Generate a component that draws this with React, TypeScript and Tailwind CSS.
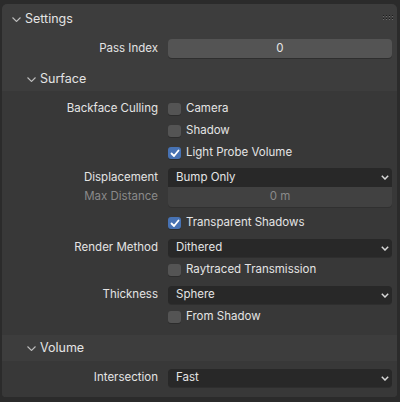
import React from "react";

const Chev = ({ className = "" }: { className?: string }) => (
  <svg width="9" height="5" viewBox="0 0 9 5" className={className}>
    <polyline points="0.5,0.5 4.5,4.5 8.5,0.5" fill="none" stroke="#bcbcbc" strokeWidth="1.1" />
  </svg>
);

const Caret = () => (
  <svg width="8" height="5" viewBox="0 0 8 5">
    <polyline points="0.8,0.8 4,4 7.2,0.8" fill="none" stroke="#d8d8d8" strokeWidth="1.5" />
  </svg>
);

const Row = ({
  label,
  dim,
  className = "",
  children,
}: {
  label?: string;
  dim?: boolean;
  className?: string;
  children?: React.ReactNode;
}) => (
  <div className={`flex items-center ${className}`}>
    <div className={`w-[156px] shrink-0 text-right ${dim ? "text-[#8a8a8a]" : "text-[#e4e4e4]"}`}>
      {label}
    </div>
    <div className="ml-[10px] w-[224px] shrink-0">{children}</div>
  </div>
);

const CheckBox = ({ checked, label }: { checked?: boolean; label: string }) => (
  <div className="flex items-center">
    <div
      className={`w-[13px] h-[12px] rounded-[3px] flex items-center justify-center shadow-[0_1px_0_#2c2c2c] ${
        checked ? "bg-[#4772b3]" : "bg-[#545454]"
      }`}
    >
      {checked && (
        <svg width="10" height="9" viewBox="0 0 10 9">
          <polyline points="1.5,4.5 4,7 8.5,1.5" fill="none" stroke="#ffffff" strokeWidth="1.8" strokeLinecap="round" strokeLinejoin="round" />
        </svg>
      )}
    </div>
    <span className="ml-[5px] text-[#e4e4e4]">{label}</span>
  </div>
);

const Dropdown = ({ value, className = "" }: { value: string; className?: string }) => (
  <div
    className={`bg-[#282828] flex items-center justify-between pl-[8px] pr-[3px] text-[#e4e4e4] ${className}`}
  >
    <span>{value}</span>
    <Caret />
  </div>
);

const SubHeader = ({ title, className = "" }: { title: string; className?: string }) => (
  <div className={`flex items-center bg-[#3d3d3d] ${className}`}>
    <Chev className="ml-[25px]" />
    <span className="ml-[4px] text-[12.5px] text-[#e4e4e4]">{title}</span>
  </div>
);

export default function App() {
  return (
    <div className="w-[400px] h-[402px] bg-[#2b2b2b] pt-[4px] overflow-hidden font-['Inter','Noto_Sans',sans-serif] text-[11.5px] leading-none">
      <div className="ml-[2px] w-[395px] rounded-t-[5px] rounded-b-[4px] bg-[#3d3d3d] overflow-hidden">
        {/* Settings header */}
        <div className="h-[30px] flex items-center relative">
          <Chev className="ml-[10px]" />
          <span className="ml-[4px] text-[12.5px] text-[#e4e4e4]">Settings</span>
          <div className="absolute right-[4px] top-[11px] grid grid-cols-4 gap-x-[2px] gap-y-[2px]">
            {Array.from({ length: 8 }).map((_, i) => (
              <div key={i} className="w-[1px] h-[1px] bg-[#1c1c1c] shadow-[0_1px_0_#6a6a6a]" />
            ))}
          </div>
        </div>

        {/* Pass Index */}
        <Row label="Pass Index" className="mt-[5px] h-[19px]">
          <div className="h-[19px] rounded-[4px] bg-[#545454] flex items-center justify-center text-[#e6e6e6] shadow-[0_1px_0_#2e2e2e]">
            0
          </div>
        </Row>

        {/* Surface */}
        <SubHeader title="Surface" className="mt-[10px] h-[23px]" />
        <div className="bg-[#383838] pt-[7px] pb-[7px]">
          <Row label="Backface Culling" className="h-[22px]">
            <CheckBox label="Camera" />
          </Row>
          <Row className="h-[22px]">
            <CheckBox label="Shadow" />
          </Row>
          <Row className="h-[22px]">
            <CheckBox checked label="Light Probe Volume" />
          </Row>
          <Row label="Displacement" className="mt-[4px] h-[19px]">
            <Dropdown value="Bump Only" className="h-[19px] rounded-t-[4px]" />
          </Row>
          <Row label="Max Distance" dim className="h-[20px]">
            <div className="h-[20px] rounded-b-[4px] bg-[#414141] flex items-center justify-center text-[#8a8a8a] shadow-[0_1px_0_#303030]">
              0 m
            </div>
          </Row>
          <Row className="mt-[5px] h-[22px]">
            <CheckBox checked label="Transparent Shadows" />
          </Row>
          <Row label="Render Method" className="mt-[5px] h-[18px]">
            <Dropdown value="Dithered" className="h-[18px] rounded-[4px] shadow-[0_1px_0_#2e2e2e]" />
          </Row>
          <Row className="mt-[2px] h-[22px]">
            <CheckBox label="Raytraced Transmission" />
          </Row>
          <Row label="Thickness" className="mt-[5px] h-[18px]">
            <Dropdown value="Sphere" className="h-[18px] rounded-[4px] shadow-[0_1px_0_#2e2e2e]" />
          </Row>
          <Row className="mt-[2px] h-[22px]">
            <CheckBox label="From Shadow" />
          </Row>
        </div>

        {/* Volume */}
        <SubHeader title="Volume" className="h-[26px]" />
        <div className="bg-[#383838] pt-[8px] pb-[10px]">
          <Row label="Intersection" className="h-[18px]">
            <Dropdown value="Fast" className="h-[18px] rounded-[4px] shadow-[0_1px_0_#2e2e2e]" />
          </Row>
        </div>
      </div>
    </div>
  );
}
